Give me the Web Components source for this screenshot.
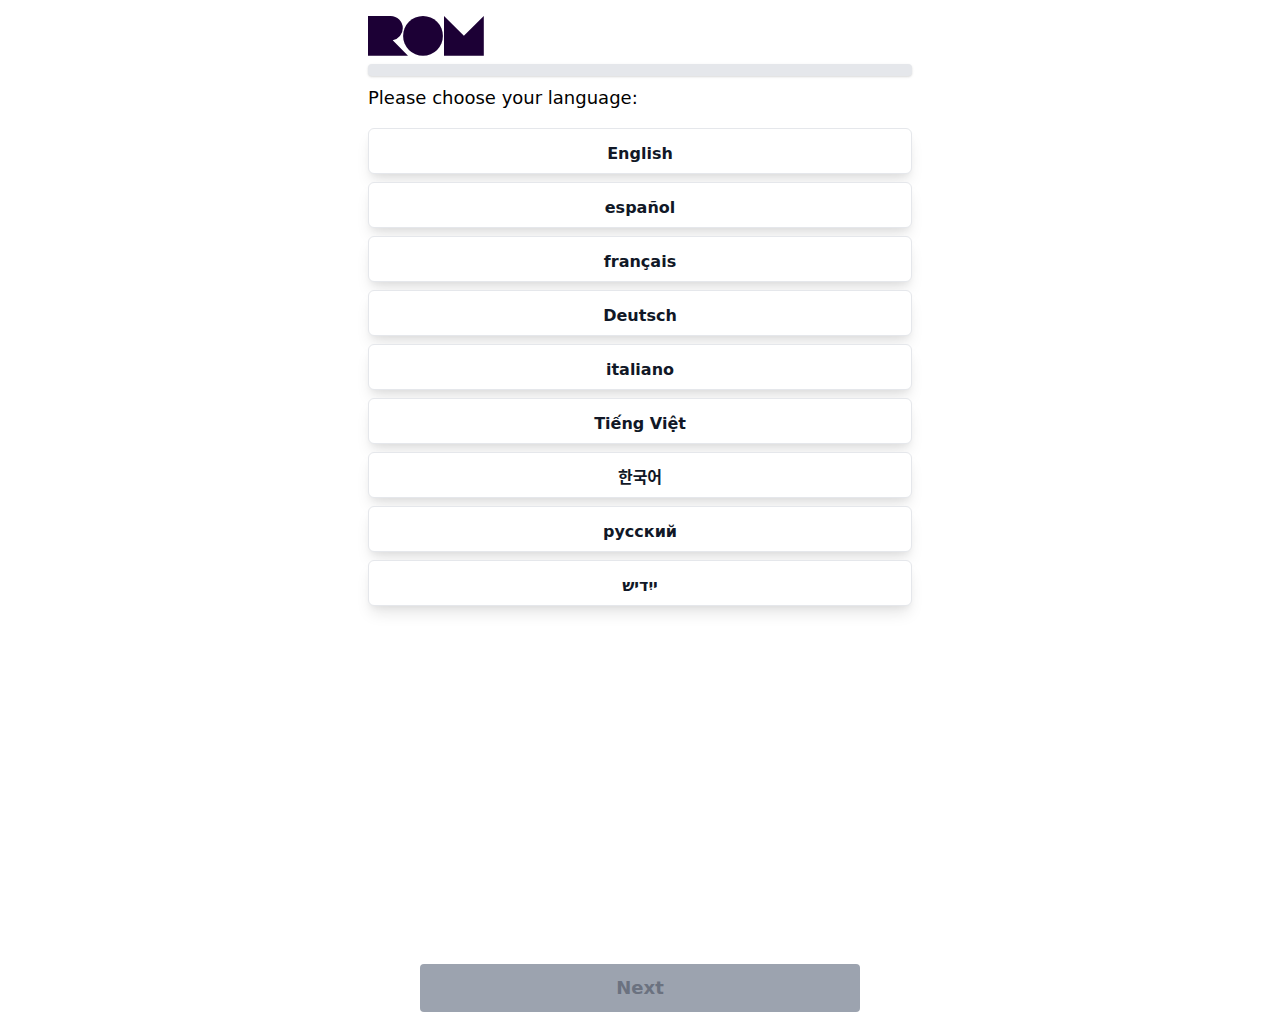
<!DOCTYPE html>
<html lang="en">
<head>
<meta charset="utf-8">
<meta name="viewport" content="width=device-width, initial-scale=1">
<title>Choose your language</title>
<style>
  body { margin: 0; background: #fff; color: #000; font-family: "DejaVu Sans", "Noto Sans CJK KR", sans-serif; font-size: 16px; line-height: 24px; }
</style>
</head>
<body>
<survey-page>
  <rom-logo slot="header"></rom-logo>
  <progress-track slot="header"></progress-track>
  <language-list>
    <span slot="title">Please choose your language:</span>
    <language-option lang="en">English</language-option>
    <language-option lang="es">español</language-option>
    <language-option lang="fr">français</language-option>
    <language-option lang="de">Deutsch</language-option>
    <language-option lang="it">italiano</language-option>
    <language-option lang="vi">Tiếng Việt</language-option>
    <language-option lang="ko">한국어</language-option>
    <language-option lang="ru">русский</language-option>
    <language-option lang="yi">ייִדיש</language-option>
  </language-list>
  <next-button slot="footer">Next</next-button>
</survey-page>
<script>
  class BaseElement extends HTMLElement {
    constructor() {
      super();
      this.attachShadow({ mode: "open" }).innerHTML = this.constructor.markup;
    }
  }

  customElements.define("survey-page", class extends BaseElement {
    static markup = `
      <style>
        :host { display: flex; flex-direction: column; min-height: 100vh; box-sizing: border-box; max-width: 576px; margin: 0 auto; padding: 16px 16px 12px; }
        header { display: flex; flex-direction: column; gap: 8px; }
        main { flex: 1; padding: 8px 0 24px; }
        footer { display: flex; justify-content: center; }
      </style>
      <header><slot name="header"></slot></header>
      <main><slot></slot></main>
      <footer><slot name="footer"></slot></footer>`;
  });

  customElements.define("rom-logo", class extends BaseElement {
    static markup = `
      <style>
        :host { display: block; }
        svg { display: block; height: 40px; width: 116px; fill: #1c0035; }
      </style>
      <svg viewBox="0 0 116 40" role="img" aria-label="ROM">
        <path d="M0 0H22.600A12.200 12.200 0 0 1 34.800 12.200A12.200 12.200 0 0 1 24.700 24.300L40 39.700H0Z"/>
        <circle cx="55" cy="19.9" r="19.9"/>
        <path d="M76 0L95.900 19.700L115.800 0V39.700H76Z"/>
      </svg>`;
  });

  customElements.define("progress-track", class extends BaseElement {
    static markup = `
      <style>
        :host { display: block; }
        div { height: 12px; border-radius: 4px; background: #e5e7eb; box-shadow: 0 1px 3px rgba(0,0,0,.1), 0 1px 2px rgba(0,0,0,.06); }
      </style>
      <div role="progressbar" aria-label="Progress" aria-valuemin="0" aria-valuemax="100" aria-valuenow="0"></div>`;
  });

  customElements.define("language-list", class extends BaseElement {
    static markup = `
      <style>
        :host { display: block; }
        h1 { margin: 0 0 16px; font-size: 18px; line-height: 28px; font-weight: 400; }
        .options { display: flex; flex-direction: column; gap: 8px; }
      </style>
      <h1><slot name="title"></slot></h1>
      <div class="options"><slot></slot></div>`;
  });

  customElements.define("language-option", class extends BaseElement {
    static markup = `
      <style>
        :host { display: block; }
        button { display: block; width: 100%; padding: 13px 16px 7px; border: 1px solid #e5e7eb; border-radius: 6px; background: #fff; color: #111827; font: inherit; font-weight: 700; text-align: center; cursor: pointer;
          box-shadow: 0 10px 15px -3px rgba(0,0,0,.1), 0 4px 6px -2px rgba(0,0,0,.05); }
      </style>
      <button type="button"><slot></slot></button>`;
  });

  customElements.define("next-button", class extends BaseElement {
    static markup = `
      <style>
        :host { display: block; flex: 0 1 440px; }
        button { display: block; width: 100%; padding: 10px 16px; border: 0; border-radius: 4px; background: #9ca3af; color: #6b7280; font: inherit; font-size: 18px; line-height: 28px; font-weight: 700; }
      </style>
      <button type="button" disabled><slot></slot></button>`;
  });
</script>
</body>
</html>
